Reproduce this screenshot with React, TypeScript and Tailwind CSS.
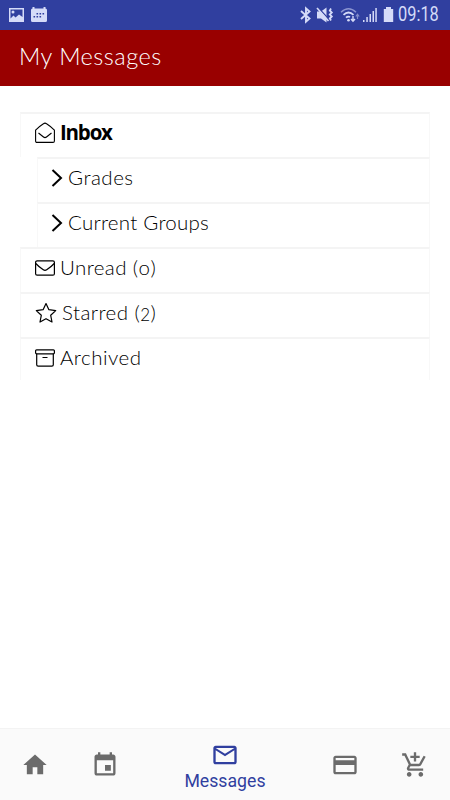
import type { ReactNode } from 'react';

const LATO = "font-['Lato','Liberation_Sans',sans-serif]";

function Row({ nested, last, icon, children }: { nested?: boolean; last?: boolean; icon: ReactNode; children: ReactNode }) {
  return (
    <li
      className={`flex items-start border-x border-t-2 border-x-[#f8f8f8] border-t-[#f4f4f4] text-black ${
        last ? 'h-[43px]' : 'h-[45px]'
      } ${nested ? 'ml-[17px] pl-[13px]' : 'pl-[14px]'}`}
    >
      <span className="flex h-[38px] items-center">{icon}</span>
      {children}
    </li>
  );
}

function Label({ className, children }: { className: string; children: ReactNode }) {
  return <span className={`flex h-9 items-center whitespace-pre text-[20.500px] leading-none ${className}`}>{children}</span>;
}

function Chevron() {
  return (
    <svg width="12" height="20" viewBox="0 0 12 20" fill="none" stroke="#000" strokeWidth="2">
      <path d="M1.500 2 10 10l-8.500 8" />
    </svg>
  );
}

function Material({ d, color = '#6b6b6b', size = 28 }: { d: string; color?: string; size?: number }) {
  return (
    <svg width={size} height={size} viewBox="0 0 24 24" fill={color}>
      <path d={d} />
    </svg>
  );
}

function StatusBar() {
  return (
    <div className="flex h-[30px] items-center justify-between bg-[#303f9f] pl-2 pr-[10px] text-[#d5dbf8]">
      <div className="flex gap-[6px]">
        <svg width="16" height="16" viewBox="0 0 16 16">
          <path fill="currentColor" fillRule="evenodd" d="M1 1h15v14H1zM2.500 2.500v9l3-3 2 2 3.500-3 3.500 2.500V2.500z" />
          <circle cx="5" cy="5" r="1.500" fill="currentColor" />
        </svg>
        <svg width="18" height="16" viewBox="0 0 18 16">
          <path fill="currentColor" d="M2.500 0h2v1.500h9V0h2v1.500q1.500 0 1.500 1.500v10.500q0 1.500-1.500 1.500h-13Q1 15 1 13.500V3q0-1.500 1.500-1.500z" />
          <path stroke="#303f9f" strokeWidth="1.600" strokeDasharray="1.600 1.400" d="M6.500 6.700h7.600M3.500 9.800h7.600" />
        </svg>
      </div>
      <div className="flex items-center">
        <svg width="14" height="18" viewBox="0 0 14 18" fill="none" stroke="currentColor" strokeWidth="1.900">
          <path d="m2 5 8.500 7.500L7 15.700V2.300l3.500 3.200L2 13" />
        </svg>
        <svg className="ml-[3px]" width="18" height="18" viewBox="0 0 18 18">
          <path fill="currentColor" d="M1 5.500h4l5.500-4v15l-5.500-4H1z" />
          <path stroke="#303f9f" strokeWidth="1.300" d="m2.500 2 11 12" />
          <path fill="none" stroke="currentColor" strokeWidth="1.600" d="m1 2 11.500 13" />
          <path fill="none" stroke="currentColor" strokeWidth="1.800" d="m15 2.500-1.200 2 2 2-2 2 2 2-2 2 1.200 2" />
        </svg>
        <svg className="ml-[6px]" width="20" height="18" viewBox="0 0 20 18" fill="none" stroke="currentColor">
          <path strokeWidth="1.500" opacity=".55" d="M1 6.200q7.500-7 15 0" />
          <path strokeWidth="1.800" d="M3.500 8.800q5-4.500 10 0M6 11.700q1.800-1.800 4-.7" />
          <path strokeWidth="1.400" d="M13 10v5m-2-2 2 2.300 2-2.300" />
          <path strokeWidth="1.200" opacity=".5" d="M17.500 13V8.500m-1.700 2 1.700-2.300 1.700 2.300" />
          <circle cx="8.500" cy="14.300" r="1.300" fill="currentColor" stroke="none" />
        </svg>
        <svg className="ml-[2px]" width="16" height="18" viewBox="0 0 16 18" fill="currentColor">
          <path d="M1 14h1.500v2H1zM4.300 11h1.500v5H4.300zM7.500 8H9v8H7.500zM10.500 5H12v11h-1.500zM13.300 2h1.500v14h-1.500z" />
        </svg>
        <svg className="ml-[5px]" width="11" height="18" viewBox="0 0 11 18" fill="currentColor">
          <path d="M3 1h5v2h2.200v13H.8V3H3z" />
        </svg>
        <span className="ml-[4px] w-[42px] origin-left scale-x-[0.840] whitespace-nowrap font-['Roboto',sans-serif] text-[19.500px] leading-none">09:18</span>
      </div>
    </div>
  );
}

export default function App() {
  return (
    <div className={`flex h-[800px] w-[450px] flex-col overflow-hidden bg-white ${LATO}`}>
      <StatusBar />
      <header className="flex h-14 items-center bg-[#990000] pb-[2px] pl-[19px] text-white">
        <h1 className="text-[23.500px] font-light leading-none tracking-[0.500px]">My Messages</h1>
      </header>
      <main className="flex-1 px-5 pt-[26px]">
        <ul>
          <Row
            icon={
              <svg width="20" height="22" viewBox="0 0 20 22" fill="none" stroke="#000" strokeWidth="1.100">
                <path d="M.6 8.200Q4 4.500 8.400 1.700q1.600-1.100 3.200 0Q16 4.500 19.400 8.200V19q0 1.400-1.400 1.400H2Q.6 20.400.6 19z" />
                <path d="m3.500 11 5 4q1.500 1.200 3 0l5-4" />
              </svg>
            }
          >
            <Label className="ml-[5px] pt-px font-['Open_Sans',sans-serif] font-bold tracking-[-1.200px]">Inbox</Label>
          </Row>
          <Row nested icon={<Chevron />}>
            <Label className="ml-[5px] font-light tracking-[0.500px]">Grades</Label>
          </Row>
          <Row nested icon={<Chevron />}>
            <Label className="ml-[5px] font-light tracking-[0.250px]">Current Groups</Label>
          </Row>
          <Row
            icon={
              <svg width="20" height="16" viewBox="0 0 20 16" fill="none" stroke="#000" strokeWidth="1.200">
                <rect x=".6" y=".8" width="18.800" height="14.400" rx="1.500" />
                <path d="M.8 3.500Q4 7 8.300 9.800q1.700 1.100 3.400 0Q16 7 19.200 3.500" />
              </svg>
            }
          >
            <Label className="ml-[5px] font-light tracking-[0.400px]">
              Unread (<span className="pt-px text-[20.500px]">o</span>)
            </Label>
          </Row>
          <Row
            icon={
              <svg width="22" height="22" viewBox="0 0 22 22" fill="none" stroke="#000" strokeWidth="1.200" strokeLinejoin="round">
                <path d="m11 1.500 2.900 6.200 6.800.9-5 4.700 1.300 6.700-6-3.300L5 20l1.300-6.700-5-4.700 6.800-.9z" />
              </svg>
            }
          >
            <Label className="ml-[5px] font-light tracking-[0.450px]">
              Starred (<span className="pt-[4px] text-[17px]">2</span>)
            </Label>
          </Row>
          <Row
            last
            icon={
              <svg width="20" height="18" viewBox="0 0 20 18" fill="none" stroke="#000" strokeWidth="1.200">
                <rect x=".6" y=".8" width="18.800" height="4" rx="1" />
                <path d="M1.700 4.800v11q0 1.400 1.400 1.400h13.800q1.400 0 1.400-1.400v-11M7.500 8.500h5" />
              </svg>
            }
          >
            <Label className="ml-[5px] font-light tracking-[0.500px]">Archived</Label>
          </Row>
        </ul>
      </main>
      <nav className="flex h-[72px] border-t border-[#f3f3f3] bg-[#fafafa]">
        <div className="flex w-[70px] items-center justify-center">
          <Material d="M10 20v-6h4v6h5v-8h3L12 3 2 12h3v8z" />
        </div>
        <div className="flex w-[70px] items-center justify-center">
          <Material d="M17 12h-5v5h5v-5zM16 1v2H8V1H6v2H5c-1.110 0-1.990.9-1.990 2L3 19c0 1.100.89 2 2 2h14c1.100 0 2-.9 2-2V5c0-1.100-.9-2-2-2h-1V1h-2zm3 18H5V8h14v11z" />
        </div>
        <div className="flex w-[170px] flex-col items-center pt-3">
          <Material color="#303f9f" d="M20 4H4c-1.100 0-1.990.9-1.990 2L2 18c0 1.100.9 2 2 2h16c1.100 0 2-.9 2-2V6c0-1.100-.9-2-2-2zm0 14H4V8l8 5 8-5v10zm-8-7L4 6h16l-8 5z" />
          <span className="mt-[4px] font-['Roboto',sans-serif] text-[17.700px] leading-none text-[#303f9f]">Messages</span>
        </div>
        <div className="flex w-[70px] items-center justify-center">
          <Material d="M20 4H4c-1.110 0-1.990.89-1.990 2L2 18c0 1.110.89 2 2 2h16c1.110 0 2-.89 2-2V6c0-1.110-.89-2-2-2zm0 14H4v-6h16v6zm0-10H4V6h16v2z" />
        </div>
        <div className="flex w-[70px] items-center justify-center">
          <Material d="M11 9h2V6h3V4h-3V1h-2v3H8v2h3v3zm-4 9c-1.100 0-1.990.9-1.990 2S5.900 22 7 22s2-.9 2-2-.9-2-2-2zm10 0c-1.100 0-1.990.9-1.990 2s.89 2 1.990 2 2-.9 2-2-.9-2-2-2zm-9.830-3.250l.03-.12.9-1.630h7.450c.75 0 1.410-.41 1.750-1.030l3.860-7.010L19.420 4h-.01l-1.100 2-2.760 5H8.530l-.13-.27L6.160 6l-.95-2-.94-2H1v2h2l3.600 7.590-1.350 2.450c-.16.28-.25.61-.25.96 0 1.100.9 2 2 2h12v-2H7.420c-.13 0-.25-.11-.25-.25z" />
        </div>
      </nav>
    </div>
  );
}
